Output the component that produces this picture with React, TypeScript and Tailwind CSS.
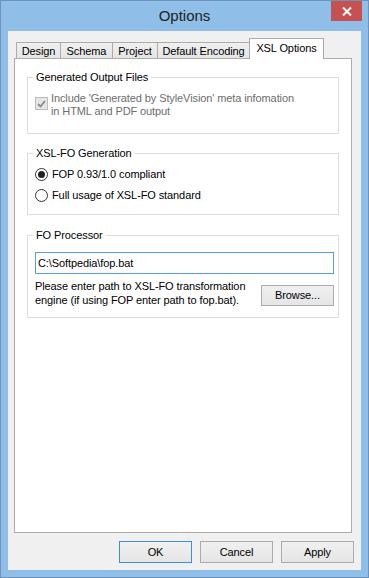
import React from "react";

const Tab = ({ label, w, active }: { label: string; w: string; active?: boolean }) =>
  active ? (
    <div
      className={`${w} h-[21px] -ml-px relative z-10 bg-white border border-b-0 border-[#acacac] flex items-center justify-center text-[11px] leading-[13px] text-black pb-[1px]`}
    >
      {label}
    </div>
  ) : (
    <div
      className={`${w} h-[17px] -ml-px first:ml-0 bg-gradient-to-b from-[#f0f0f0] to-[#e5e5e5] border border-[#acacac] flex items-center justify-center text-[11px] leading-[13px] text-black pt-[1px]`}
    >
      {label}
    </div>
  );

const Button = ({ label, primary, w }: { label: string; primary?: boolean; w: string }) => (
  <div
    className={`${w} h-[22px] border ${
      primary ? "border-[#3c8fe0]" : "border-[#acacac]"
    } bg-gradient-to-b from-[#f0f0f0] to-[#e5e5e5] flex items-center justify-center text-[11px] leading-[13px] text-black`}
  >
    {label}
  </div>
);

const Radio = ({ checked }: { checked?: boolean }) => (
  <div className="w-[13px] h-[13px] rounded-full border border-[#333333] bg-white flex items-center justify-center shrink-0">
    {checked && <div className="w-[7px] h-[7px] rounded-full bg-[#222222]" />}
  </div>
);

export default function App() {
  return (
    <div className="w-[369px] h-[578px] bg-[#8fbee9] border border-[#6d92bb] flex flex-col relative font-['Liberation_Sans',Arial,sans-serif] text-black tracking-[-0.1px]">
      {/* Title bar */}
      <div className="h-[30px] flex items-center justify-center text-[15px] leading-[18px] text-[#222222] tracking-normal">
        Options
      </div>
      <div className="absolute top-0 right-[6px] w-[31px] h-[20px] bg-[#c75050] flex items-center justify-center">
        <svg width="10" height="9" viewBox="0 0 10 9">
          <path d="M1 0.5 L9 8.5 M9 0.5 L1 8.5" stroke="white" strokeWidth="2" />
        </svg>
      </div>

      {/* Client area */}
      <div className="mx-[7px] mb-[7px] flex-1 bg-[#f0f0f0] flex flex-col pt-[7px] pl-[6px] pr-[9px] pb-[7px]">
        {/* Tabs */}
        <div className="h-[21px] flex items-end pl-[2px]">
          <Tab label="Design" w="w-[45px]" />
          <Tab label="Schema" w="w-[53px]" />
          <Tab label="Project" w="w-[46px]" />
          <Tab label="Default Encoding" w="w-[93px]" />
          <Tab label="XSL Options" w="w-[75px]" active />
        </div>

        {/* Tab panel */}
        <div className="-mt-px flex-1 bg-white border border-[#acacac] px-[12px] pt-[11px] flex flex-col">
          {/* Generated Output Files */}
          <fieldset className="h-[64px] border border-[#dcdcdc] pl-[7px] pr-[4px]">
            <legend className="-ml-[2px] px-[3px] text-[11px] leading-[14px]">Generated Output Files</legend>
            <div className="flex items-start gap-[3px] pt-[8px]">
              <div className="mt-[5px] w-[13px] h-[13px] border border-[#bcbcbc] bg-[#e6e6e6] flex items-center justify-center shrink-0">
                <svg width="9" height="8" viewBox="0 0 9 8">
                  <path d="M1 4 L3.5 6.5 L8 1" stroke="#8a8a8a" strokeWidth="1.8" fill="none" />
                </svg>
              </div>
              <div className="text-[11px] leading-[13px] text-[#6d6d6d]">
                Include 'Generated by StyleVision' meta infomation
                <br />
                in HTML and PDF output
              </div>
            </div>
          </fieldset>

          {/* XSL-FO Generation */}
          <fieldset className="mt-[12px] h-[69px] border border-[#dcdcdc] pl-[7px] pr-[4px]">
            <legend className="-ml-[2px] px-[3px] text-[11px] leading-[14px]">XSL-FO Generation</legend>
            <div className="pt-[4px] flex flex-col">
              <div className="h-[21px] flex items-center gap-[4px] text-[11px] leading-[13px]">
                <Radio checked />
                <span>FOP 0.93/1.0 compliant</span>
              </div>
              <div className="h-[21px] flex items-center gap-[4px] text-[11px] leading-[13px]">
                <Radio />
                <span>Full usage of XSL-FO standard</span>
              </div>
            </div>
          </fieldset>

          {/* FO Processor */}
          <fieldset className="mt-[13px] h-[90px] border border-[#dcdcdc] pl-[7px] pr-[4px]">
            <legend className="-ml-[2px] px-[3px] text-[11px] leading-[14px]">FO Processor</legend>
            <div className="pt-[10px] flex flex-col">
              <div className="h-[22px] border border-[#569de5] bg-white flex items-center pl-[2px] text-[11px] leading-[13px]">
                C:\Softpedia\fop.bat
              </div>
              <div className="mt-[5px] flex items-start justify-between">
                <div className="text-[11px] leading-[14px]">
                  Please enter path to XSL-FO transformation
                  <br />
                  engine (if using FOP enter path to fop.bat).
                </div>
                <div className="mt-[6px] w-[73px] h-[21px] border border-[#acacac] bg-gradient-to-b from-[#f0f0f0] to-[#e5e5e5] flex items-center justify-center text-[11px] leading-[13px]">
                  Browse...
                </div>
              </div>
            </div>
          </fieldset>
        </div>

        {/* Buttons */}
        <div className="mt-[8px] h-[22px] flex justify-end gap-[8px] -mr-[2px]">
          <Button label="OK" w="w-[73px]" primary />
          <Button label="Cancel" w="w-[73px]" />
          <Button label="Apply" w="w-[73px]" />
        </div>
      </div>
    </div>
  );
}
